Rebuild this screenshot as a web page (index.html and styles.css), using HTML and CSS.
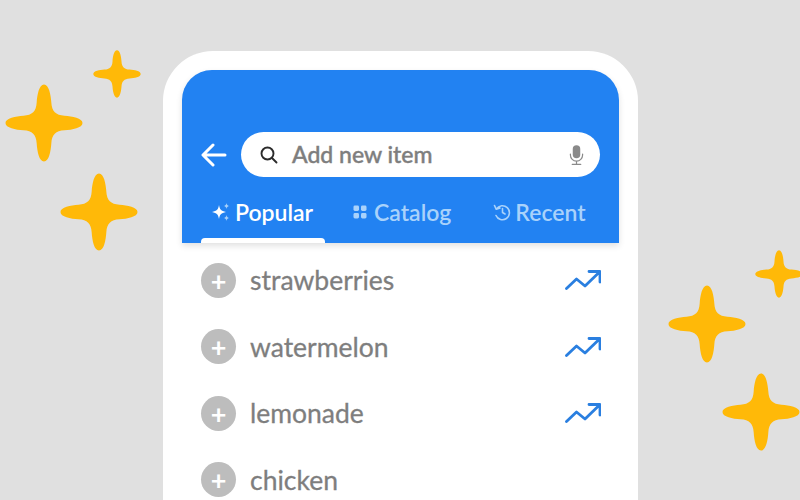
FILE: index.html
```html
<!DOCTYPE html>
<html lang="en">
<head>
  <meta charset="UTF-8" />
  <title>Add new item</title>
  <link rel="stylesheet" href="styles.css">
</head>
<body>
  <svg class="defs" width="0" height="0" aria-hidden="true">
    <symbol id="star" viewBox="-40 -40 80 80">
      <path d="M0 -39.500C5 -39.500 7 -29 7.500 -21C8 -12 12 -8 21 -7.500C29 -7 39.500 -5 39.500 0C39.500 5 29 7 21 7.500C12 8 8 12 7.500 21C7 29 5 39.500 0 39.500C-5 39.500 -7 29 -7.500 21C-8 12 -12 8 -21 7.500C-29 7 -39.500 5 -39.500 0C-39.500 -5 -29 -7 -21 -7.500C-12 -8 -8 -12 -7.500 -21C-7 -29 -5 -39.500 0 -39.500Z" />
    </symbol>
    <symbol id="trend" viewBox="0 0 36 22">
      <path d="M1.500 19.500L11.500 10L20 17L34.500 3M24 2.500H35V13" fill="none" stroke="currentColor" stroke-width="2.800" stroke-linecap="round" stroke-linejoin="round" />
    </symbol>
  </svg>

  <svg class="star star-a"><use href="#star" /></svg>
  <svg class="star star-b"><use href="#star" /></svg>
  <svg class="star star-small star-c"><use href="#star" /></svg>
  <svg class="star star-d"><use href="#star" /></svg>
  <svg class="star star-e"><use href="#star" /></svg>
  <svg class="star star-small star-f"><use href="#star" /></svg>

  <main class="phone">
    <header class="app-header">
      <div class="search-row">
        <svg class="back-icon" viewBox="0 0 26 24" fill="none" stroke="currentColor" stroke-width="3" stroke-linecap="round" stroke-linejoin="round">
          <path d="M24 12H2.500M12 2L2 12L12 22" />
        </svg>
        <div class="search-box">
          <svg class="search-icon" viewBox="0 0 18 18" fill="none" stroke="currentColor" stroke-width="1.900" stroke-linecap="round">
            <circle cx="7.500" cy="7.500" r="6" />
            <path d="M12 12L16.500 16.500" />
          </svg>
          <span class="search-text">Add new item</span>
          <svg class="mic-icon" viewBox="0 0 16 22">
            <rect x="4" y="0.500" width="8" height="14" rx="4" fill="#8a8a8a" />
            <path d="M1.500 10V11A6.500 6.500 0 0 0 14.500 11V10M8 17.500V21M3.500 21H12.500" fill="none" stroke="#8a8a8a" stroke-width="1.300" stroke-linecap="round" />
          </svg>
        </div>
      </div>
      <nav class="tabs">
        <div class="tab tab-active">
          <svg class="tab-icon-sparkle" viewBox="0 0 20 20" fill="currentColor">
            <path d="M8 3C8.800 7.500 10 9 15 10C10 11 8.800 12.500 8 17C7.200 12.500 6 11 1 10C6 9 7.200 7.500 8 3Z" />
            <path class="faded" d="M15.500 1C15.800 3 16.500 3.600 18.500 4C16.500 4.400 15.800 5 15.500 7C15.200 5 14.500 4.400 12.500 4C14.500 3.600 15.200 3 15.500 1ZM15.500 13C15.800 15 16.500 15.600 18.500 16C16.500 16.400 15.800 17 15.500 19C15.200 17 14.500 16.400 12.500 16C14.500 15.600 15.200 15 15.500 13Z" />
          </svg>
          <span>Popular</span>
        </div>
        <div class="tab tab-catalog">
          <svg class="tab-icon-grid" viewBox="0 0 14 14" fill="currentColor">
            <rect x="0.500" y="0.500" width="5.500" height="5.500" rx="1.400" />
            <rect x="8" y="0.500" width="5.500" height="5.500" rx="1.400" />
            <rect x="0.500" y="8" width="5.500" height="5.500" rx="1.400" />
            <rect x="8" y="8" width="5.500" height="5.500" rx="1.400" />
          </svg>
          <span>Catalog</span>
        </div>
        <div class="tab tab-recent">
          <svg class="tab-icon-history" viewBox="0 0 18 18" fill="none" stroke="currentColor" stroke-width="1.600" stroke-linecap="round" stroke-linejoin="round">
            <path d="M3.500 6A7 7 0 1 1 3 12.500M1.500 2.500L3.300 6.300L7 5M9.500 5.500V9.500L12 11" />
          </svg>
          <span>Recent</span>
        </div>
      </nav>
    </header>

    <ul class="item-list">
      <li class="item">
        <span class="add-btn">+</span>
        <span class="item-name">strawberries</span>
        <svg class="trend-icon"><use href="#trend" /></svg>
      </li>
      <li class="item">
        <span class="add-btn">+</span>
        <span class="item-name">watermelon</span>
        <svg class="trend-icon"><use href="#trend" /></svg>
      </li>
      <li class="item">
        <span class="add-btn">+</span>
        <span class="item-name">lemonade</span>
        <svg class="trend-icon"><use href="#trend" /></svg>
      </li>
      <li class="item">
        <span class="add-btn">+</span>
        <span class="item-name">chicken</span>
      </li>
    </ul>
  </main>
</body>
</html>
```

FILE: styles.css
```css
:root {
  --page-bg: #e0e0e0;
  --blue: #2282f2;
  --star: #ffb908;
  --grey-text: #7e7e7e;
  --tab-faded: #a9d2fb;
}
html, body {
  height: 100%;
}
body {
  margin: 0;
  height: 500px;
  overflow: hidden;
  position: relative;
  background-color: var(--page-bg);
  font-family: Lato, "Open Sans", sans-serif;
}
.defs {
  position: absolute;
}

/* stars float free on the background */
.star {
  position: absolute;
  width: 78px;
  height: 78px;
  fill: var(--star);
}
.star-small {
  width: 48px;
  height: 48px;
}
.star-a { left: 5px; top: 84px; }
.star-b { left: 60px; top: 173px; }
.star-c { left: 93px; top: 50px; }
.star-d { left: 668px; top: 285px; }
.star-e { left: 722px; top: 373px; }
.star-f { left: 755px; top: 250px; }

.phone {
  box-sizing: border-box;
  width: 475px;
  height: 449px;
  margin-left: 163px;
  position: absolute;
  top: 51px;
  padding: 19px 19px 0;
  background-color: #fff;
  border-radius: 50px 50px 0 0;
}

.app-header {
  box-sizing: border-box;
  height: 173px;
  padding: 62px 19px 0;
  background-color: var(--blue);
  border-radius: 30px 30px 0 0;
  box-shadow: 0 3px 6px rgba(0, 0, 0, 0.12);
  color: #fff;
  position: relative;
}
.search-row {
  display: flex;
  align-items: center;
  gap: 14px;
}
.back-icon {
  width: 26px;
  height: 24px;
  flex: none;
}
.search-box {
  flex: 1;
  height: 45px;
  display: flex;
  align-items: center;
  padding: 0 16px 0 19px;
  background-color: #fff;
  border-radius: 23px;
}
.search-icon {
  width: 18px;
  height: 18px;
  color: #2b2b2b;
  flex: none;
}
.search-text {
  margin-left: 14px;
  margin-top: -1px;
  flex: 1;
  font-size: 23px;
  font-weight: 500;
  color: var(--grey-text);
  -webkit-text-stroke: 0.4px var(--grey-text);
}
.mic-icon {
  width: 15px;
  height: 22px;
  flex: none;
}

.tabs {
  display: flex;
  margin-top: 13px;
  font-size: 23px;
  font-weight: 600;
  color: var(--tab-faded);
}
.tab {
  display: flex;
  align-items: center;
  height: 44px;
  box-sizing: border-box;
}
.tab-active {
  width: 124px;
  padding-left: 10px;
  gap: 4px;
  color: #fff;
  position: relative;
}
.tab-active::after {
  content: "";
  position: absolute;
  left: 0;
  right: 0;
  bottom: -9px;
  height: 5px;
  background-color: #fff;
  border-radius: 4px 4px 0 0;
}
.faded {
  fill: var(--tab-faded);
}
.tab-icon-sparkle {
  width: 20px;
  height: 20px;
}
.tab-catalog {
  margin-left: 28px;
  gap: 7px;
}
.tab-icon-grid {
  width: 14px;
  height: 14px;
}
.tab-recent {
  margin-left: 42px;
  gap: 4px;
}
.tab-icon-history {
  width: 18px;
  height: 18px;
}

.item-list {
  list-style: none;
  margin: 0;
  padding: 4px 19px 0;
}
.item {
  display: flex;
  align-items: center;
  height: 66.500px;
}
.add-btn {
  width: 35px;
  height: 35px;
  flex: none;
  display: flex;
  align-items: center;
  justify-content: center;
  border-radius: 50%;
  background-color: #bdbdbd;
  color: #fff;
  font-size: 27px;
  font-weight: 700;
  line-height: 1;
}
.item-name {
  margin-left: 14px;
  flex: 1;
  font-size: 26.500px;
  color: var(--grey-text);
  -webkit-text-stroke: 0.3px var(--grey-text);
}
.trend-icon {
  width: 36px;
  height: 22px;
  margin-right: -1px;
  color: #2a7fe0;
  flex: none;
}
```
